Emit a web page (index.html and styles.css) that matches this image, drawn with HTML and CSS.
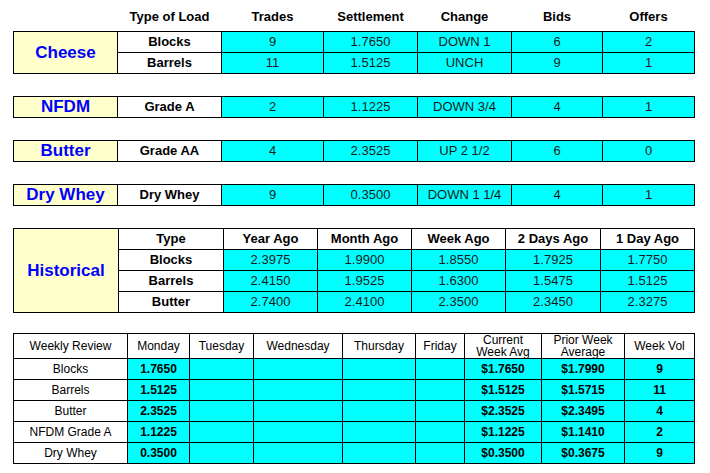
FILE: index.html
```html
<!DOCTYPE html>
<html>
<head>
<meta charset="utf-8">
<title>Dairy Market Report</title>
<link rel="stylesheet" href="styles.css">
</head>
<body>
<div class="page">
  <table class="grid top">
    <colgroup><col class="c1"><col class="c2"><col class="c3"><col class="c4"><col class="c5"><col class="c6"><col class="c7"></colgroup>
    <thead>
      <tr class="heads"><th></th><th>Type of Load</th><th>Trades</th><th>Settlement</th><th>Change</th><th>Bids</th><th>Offers</th></tr>
    </thead>
    <tbody>
      <tr><td class="label" rowspan="2">Cheese</td><td class="type">Blocks</td><td class="val">9</td><td class="val">1.7650</td><td class="val">DOWN 1</td><td class="val">6</td><td class="val">2</td></tr>
      <tr><td class="type">Barrels</td><td class="val">11</td><td class="val">1.5125</td><td class="val">UNCH</td><td class="val">9</td><td class="val">1</td></tr>
    </tbody>
  </table>

  <table class="grid top">
    <colgroup><col class="c1"><col class="c2"><col class="c3"><col class="c4"><col class="c5"><col class="c6"><col class="c7"></colgroup>
    <tr><td class="label">NFDM</td><td class="type">Grade A</td><td class="val">2</td><td class="val">1.1225</td><td class="val">DOWN 3/4</td><td class="val">4</td><td class="val">1</td></tr>
  </table>

  <table class="grid top">
    <colgroup><col class="c1"><col class="c2"><col class="c3"><col class="c4"><col class="c5"><col class="c6"><col class="c7"></colgroup>
    <tr><td class="label">Butter</td><td class="type">Grade AA</td><td class="val">4</td><td class="val">2.3525</td><td class="val">UP 2 1/2</td><td class="val">6</td><td class="val">0</td></tr>
  </table>

  <table class="grid top">
    <colgroup><col class="c1"><col class="c2"><col class="c3"><col class="c4"><col class="c5"><col class="c6"><col class="c7"></colgroup>
    <tr><td class="label">Dry Whey</td><td class="type">Dry Whey</td><td class="val">9</td><td class="val">0.3500</td><td class="val">DOWN 1 1/4</td><td class="val">4</td><td class="val">1</td></tr>
  </table>

  <table class="grid hist">
    <colgroup><col class="h1"><col class="h2"><col class="h3"><col class="h4"><col class="h5"><col class="h6"><col class="h7"></colgroup>
    <tr><td class="label" rowspan="4">Historical</td><td class="type">Type</td><td class="type">Year Ago</td><td class="type">Month Ago</td><td class="type">Week Ago</td><td class="type">2 Days Ago</td><td class="type">1 Day Ago</td></tr>
    <tr><td class="type">Blocks</td><td class="val">2.3975</td><td class="val">1.9900</td><td class="val">1.8550</td><td class="val">1.7925</td><td class="val">1.7750</td></tr>
    <tr><td class="type">Barrels</td><td class="val">2.4150</td><td class="val">1.9525</td><td class="val">1.6300</td><td class="val">1.5475</td><td class="val">1.5125</td></tr>
    <tr><td class="type">Butter</td><td class="val">2.7400</td><td class="val">2.4100</td><td class="val">2.3500</td><td class="val">2.3450</td><td class="val">2.3275</td></tr>
  </table>

  <table class="grid weekly">
    <colgroup><col class="w1"><col class="w2"><col class="w3"><col class="w4"><col class="w5"><col class="w6"><col class="w7"><col class="w8"><col class="w9"></colgroup>
    <tr class="whead"><td>Weekly Review</td><td>Monday</td><td>Tuesday</td><td>Wednesday</td><td>Thursday</td><td>Friday</td><td><span class="ln">Current</span><span class="ln">Week Avg</span></td><td><span class="ln">Prior Week</span><span class="ln">Average</span></td><td>Week Vol</td></tr>
    <tr><td class="name">Blocks</td><td class="val b">1.7650</td><td class="val"></td><td class="val"></td><td class="val"></td><td class="val"></td><td class="val b">$1.7650</td><td class="val b">$1.7990</td><td class="val b">9</td></tr>
    <tr><td class="name">Barrels</td><td class="val b">1.5125</td><td class="val"></td><td class="val"></td><td class="val"></td><td class="val"></td><td class="val b">$1.5125</td><td class="val b">$1.5715</td><td class="val b">11</td></tr>
    <tr><td class="name">Butter</td><td class="val b">2.3525</td><td class="val"></td><td class="val"></td><td class="val"></td><td class="val"></td><td class="val b">$2.3525</td><td class="val b">$2.3495</td><td class="val b">4</td></tr>
    <tr><td class="name">NFDM Grade A</td><td class="val b">1.1225</td><td class="val"></td><td class="val"></td><td class="val"></td><td class="val"></td><td class="val b">$1.1225</td><td class="val b">$1.1410</td><td class="val b">2</td></tr>
    <tr><td class="name">Dry Whey</td><td class="val b">0.3500</td><td class="val"></td><td class="val"></td><td class="val"></td><td class="val"></td><td class="val b">$0.3500</td><td class="val b">$0.3675</td><td class="val b">9</td></tr>
  </table>
</div>
</body>
</html>
```

FILE: styles.css
```css
html, body {
  margin: 0;
  padding: 0;
  background: #ffffff;
}

body {
  font-family: "Liberation Sans", Arial, sans-serif;
  color: #000000;
}

.page {
  padding: 9px 0 0 13px;
  display: flex;
  flex-direction: column;
  align-items: flex-start;
  gap: 22px;
}

.grid {
  border-collapse: collapse;
  table-layout: fixed;
  width: 682px;
  font-size: 13px;
}

.grid td {
  border: 1px solid #000000;
  padding: 0;
  line-height: 20px;
  text-align: center;
  vertical-align: middle;
  white-space: nowrap;
}

.heads th {
  border: none;
  padding: 0 0 7px;
  line-height: 15px;
  font-weight: bold;
  font-size: 13px;
  text-align: center;
  vertical-align: top;
}

.label {
  background: #ffffcc;
  color: #0000ff;
  font-weight: bold;
  font-size: 17px;
}

.type {
  background: #ffffff;
  font-weight: bold;
}

.val {
  background: #00ffff;
  color: #1a1a1a;
}

.c1 { width: 104px; }
.c2 { width: 104px; }
.c3 { width: 102px; }
.c4 { width: 94px; }
.c5 { width: 94px; }
.c6 { width: 91px; }
.c7 { width: 92px; }

.h1 { width: 105px; }
.h2 { width: 105px; }
.h3 { width: 94px; }
.h4 { width: 94px; }
.h5 { width: 94px; }
.h6 { width: 95px; }
.h7 { width: 94px; }

.weekly {
  margin-top: -2px;
  font-size: 12px;
}

.weekly td {
  line-height: 20px;
}

.whead td {
  background: #ffffff;
  line-height: 12px;
  height: 21px;
}

.whead .ln {
  display: block;
  height: 12px;
  line-height: 12px;
}

.weekly .name {
  background: #ffffff;
}

.weekly .b {
  font-weight: bold;
  color: #000000;
}

.w1 { width: 114px; }
.w2 { width: 62px; }
.w3 { width: 64px; }
.w4 { width: 89px; }
.w5 { width: 73px; }
.w6 { width: 49px; }
.w7 { width: 77px; }
.w8 { width: 83px; }
.w9 { width: 70px; }
```
